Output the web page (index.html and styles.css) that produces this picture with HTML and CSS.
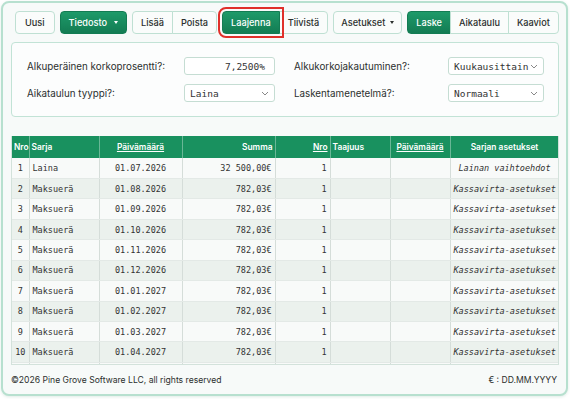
FILE: index.html
```html
<!DOCTYPE html>
<html lang="fi">
<head>
    <meta charset="UTF-8">
    <meta name="viewport" content="width=device-width, initial-scale=1.0">
    <title>Lainalaskuri</title>
    <link rel="stylesheet" href="styles.css">
</head>
<body>
    <div class="app">
        <div class="toolbar">
            <button class="btn wide">Uusi</button>
            <button class="btn btn-primary dropdown">Tiedosto</button>
            <div class="btn-group">
                <button class="btn">Lisää</button>
                <button class="btn">Poista</button>
            </div>
            <div class="btn-group">
                <button class="btn btn-primary highlight">Laajenna</button>
                <button class="btn">Tiivistä</button>
            </div>
            <button class="btn dropdown tight">Asetukset</button>
            <div class="btn-group">
                <button class="btn btn-primary">Laske</button>
                <button class="btn">Aikataulu</button>
                <button class="btn">Kaaviot</button>
            </div>
        </div>

        <div class="settings">
            <label class="field-label">Alkuperäinen korkoprosentti?:</label>
            <div class="input num">7,2500%</div>
            <label class="field-label right-col">Alkukorkojakautuminen?:</label>
            <div class="input select"><span>Kuukausittain</span><svg width="8" height="5" viewBox="0 0 8 5"><path d="M1 1l3 3 3-3" fill="none" stroke="#888" stroke-width="1"/></svg></div>

            <label class="field-label">Aikataulun tyyppi?:</label>
            <div class="input select"><span>Laina</span><svg width="8" height="5" viewBox="0 0 8 5"><path d="M1 1l3 3 3-3" fill="none" stroke="#888" stroke-width="1"/></svg></div>
            <label class="field-label right-col">Laskentamenetelmä?:</label>
            <div class="input select"><span>Normaali</span><svg width="8" height="5" viewBox="0 0 8 5"><path d="M1 1l3 3 3-3" fill="none" stroke="#888" stroke-width="1"/></svg></div>
        </div>

        <div class="table-wrap">
            <table class="schedule">
                <colgroup>
                    <col style="width:17px"><col style="width:70px"><col style="width:83px"><col style="width:93px">
                    <col style="width:55px"><col style="width:60px"><col style="width:60px"><col style="width:109px">
                </colgroup>
                <thead>
                    <tr>
                        <th class="c">Nro</th>
                        <th class="l">Sarja</th>
                        <th class="c"><u>Päivämäärä</u></th>
                        <th class="r">Summa</th>
                        <th class="r"><u>Nro</u></th>
                        <th class="l">Taajuus</th>
                        <th class="c"><u>Päivämäärä</u></th>
                        <th class="c">Sarjan asetukset</th>
                    </tr>
                </thead>
                <tbody id="rows"></tbody>
            </table>
        </div>

        <div class="footer">
            <span>©2026 Pine Grove Software LLC, all rights reserved</span>
            <span>€ : DD.MM.YYYY</span>
        </div>
    </div>

    <script>
        const rows = [
            { n: 1, sarja: "Laina", date: "01.07.2026", sum: "32 500,00€", opt: "Lainan vaihtoehdot" },
            { n: 2, sarja: "Maksuerä", date: "01.08.2026", sum: "782,03€", opt: "Kassavirta-asetukset" },
            { n: 3, sarja: "Maksuerä", date: "01.09.2026", sum: "782,03€", opt: "Kassavirta-asetukset" },
            { n: 4, sarja: "Maksuerä", date: "01.10.2026", sum: "782,03€", opt: "Kassavirta-asetukset" },
            { n: 5, sarja: "Maksuerä", date: "01.11.2026", sum: "782,03€", opt: "Kassavirta-asetukset" },
            { n: 6, sarja: "Maksuerä", date: "01.12.2026", sum: "782,03€", opt: "Kassavirta-asetukset" },
            { n: 7, sarja: "Maksuerä", date: "01.01.2027", sum: "782,03€", opt: "Kassavirta-asetukset" },
            { n: 8, sarja: "Maksuerä", date: "01.02.2027", sum: "782,03€", opt: "Kassavirta-asetukset" },
            { n: 9, sarja: "Maksuerä", date: "01.03.2027", sum: "782,03€", opt: "Kassavirta-asetukset" },
            { n: 10, sarja: "Maksuerä", date: "01.04.2027", sum: "782,03€", opt: "Kassavirta-asetukset" }
        ];
        const body = document.getElementById("rows");
        rows.forEach(row => {
            const tr = document.createElement("tr");
            tr.innerHTML = `<td class="c">${row.n}</td><td class="l">${row.sarja}</td><td class="c">${row.date}</td>` +
                `<td class="r">${row.sum}</td><td class="r">1</td><td></td><td></td><td class="c opt">${row.opt}</td>`;
            body.appendChild(tr);
        });
        // partly scrolled-in next row, lines only
        const tail = document.createElement("tr");
        tail.innerHTML = "<td></td>".repeat(8);
        body.appendChild(tail);
    </script>
</body>
</html>
```

FILE: styles.css
```css
* {
    box-sizing: border-box;
}
body {
    margin: 0;
    background: #fff;
    font-family: Inter, "Noto Sans", sans-serif;
    color: #2b2f2d;
}
.app {
    margin: 1px 2px 3px 1px;
    height: 395px;
    border: 2px solid #b7e0cf;
    border-radius: 8px;
    background: #f7faf9;
    padding: 0 7px 0 8px;
    display: flex;
    flex-direction: column;
    box-shadow: 0 1px 3px rgba(40, 120, 90, 0.15);
}
.toolbar {
    display: flex;
    align-items: flex-start;
    gap: 5px;
    padding: 8px 4px 0;
}
.btn {
    display: inline-flex;
    align-items: center;
    white-space: nowrap;
    height: 23px;
    padding: 0 8px;
    font-family: inherit;
    font-size: 9.2px;
    font-weight: 500;
    color: #2b2f2d;
    background: #fafcfb;
    border: 1px solid #bfe0d3;
    border-radius: 4px;
}
.btn.wide {
    padding: 0 9px;
}
.btn-primary {
    color: #fff;
    background: linear-gradient(to bottom, #1e9a69, #137c53);
    border-color: #137c53;
}
.dropdown::after {
    content: "";
    margin-left: 7px;
    border-top: 3px solid currentColor;
    border-left: 2.5px solid transparent;
    border-right: 2.5px solid transparent;
}
.btn.tight {
    padding: 0 7px;
}
.tight::after {
    margin-left: 5px;
}
.btn-group {
    display: flex;
}
.btn-group .btn {
    border-radius: 0;
    margin-left: -1px;
}
.btn-group .btn:first-child {
    border-radius: 4px 0 0 4px;
    margin-left: 0;
}
.btn-group .btn:last-child {
    border-radius: 0 4px 4px 0;
}
.highlight {
    position: relative;
    z-index: 1;
    outline: 2px solid #e0302a;
    outline-offset: 2px;
}
.settings {
    margin-top: 8px;
    background: #fcfdfd;
    border: 1px solid #c2e3d6;
    border-radius: 4px;
    padding: 14px 13px 14px 15px;
    display: grid;
    grid-template-columns: 157px 91px 173px 96px;
    row-gap: 9px;
    align-items: center;
}
.field-label {
    font-size: 9.8px;
    color: #2b2f2d;
}
.right-col {
    padding-left: 19px;
}
.input {
    height: 18px;
    border: 1px solid #c5ddd3;
    border-radius: 3px;
    background: #fff;
    font-family: "DejaVu Sans Mono", monospace;
    font-size: 9.5px;
    color: #333;
    display: flex;
    align-items: center;
    padding: 0 5px;
    white-space: nowrap;
}
.num {
    justify-content: flex-end;
    padding-right: 9px;
}
.select {
    justify-content: space-between;
}
.select svg {
    flex-shrink: 0;
    margin-left: 2px;
}
.table-wrap {
    margin-top: 19px;
    height: 229px;
    overflow: hidden;
    border: 1px solid #d3e2db;
    border-top: none;
    background: #f8faf9;
}
.schedule {
    border-collapse: collapse;
    table-layout: fixed;
    width: 547px;
}
.schedule th {
    height: 22px;
    padding: 0 2px;
    background: #19915f;
    color: #fff;
    font-size: 8.4px;
    font-weight: 600;
    border-right: 1px solid rgba(255, 255, 255, 0.35);
    white-space: nowrap;
}
.schedule td {
    height: 20.45px;
    padding: 0 3px;
    font-family: "DejaVu Sans Mono", monospace;
    font-size: 8.5px;
    color: #333;
    border-right: 1px solid #d5ddd9;
    border-bottom: 1px solid #e3e9e6;
    white-space: nowrap;
}
.schedule tbody tr:nth-child(odd) {
    background: #f8faf9;
}
.schedule tbody tr:nth-child(even) {
    background: #ebf1ed;
}
.c { text-align: center; }
.l { text-align: left; }
.r { text-align: right; }
.opt {
    font-style: italic;
}
.footer {
    flex: 1;
    display: flex;
    justify-content: space-between;
    align-items: center;
    font-size: 8.6px;
    color: #2b2f2d;
    padding: 0 2px 0 0;
}
```
